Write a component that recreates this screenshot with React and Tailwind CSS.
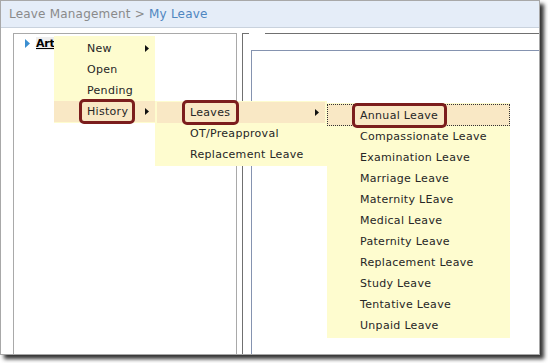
import React from "react";

const Arrow = () => (
  <svg width="4" height="7" viewBox="0 0 4 7" className="absolute right-[6px] top-[7px]">
    <path d="M0 0 L4 3.5 L0 7 Z" fill="#111" />
  </svg>
);

const Boxed = ({ children, left = 8, right = 7 }) => (
  <span className="relative inline-block h-[21px]">
    {children}
    <span
      className="absolute -top-[2px] -bottom-[2px] border-[3px] border-[#7b1d1d] rounded-[5px]"
      style={{ left: -left, right: -right }}
    />
  </span>
);

const leaveTypes = [
  "Compassionate Leave",
  "Examination Leave",
  "Marriage Leave",
  "Maternity LEave",
  "Medical Leave",
  "Paternity Leave",
  "Replacement Leave",
  "Study Leave",
  "Tentative Leave",
  "Unpaid Leave",
];

export default function App() {
  return (
    <div className="w-[548px] h-[363px] bg-white font-['DejaVu_Sans',Verdana,sans-serif]">
      <div className="relative w-[540px] h-[355px] border border-[#a8a8a8] bg-white shadow-[4px_4px_4px_rgba(0,0,0,0.8)] flex flex-col">
        {/* breadcrumb */}
        <div className="h-[27px] bg-[#e5edf8] border-b border-[#c9d2dd] pl-[8px] text-[12px] leading-[26px] tracking-[0.2px]">
          <span className="text-[#8a8a8a]">Leave Management &gt; </span>
          <span className="text-[#4f86c0]">My Leave</span>
        </div>

        <div className="flex-1 flex pl-[12px] pt-[5px]">
          {/* tree panel */}
          <div className="w-[224px] border-l border-t border-r border-[#a9a9a9] pt-[2px] pl-[11px]">
            <div className="flex items-center gap-[6px] h-[14px]">
              <svg width="5" height="9" viewBox="0 0 5 9">
                <path d="M0 0 L5 4.5 L0 9 Z" fill="#3b8fd1" />
              </svg>
              <span className="bg-[#eeeeee] text-[11px] font-bold underline text-black leading-[13px] tracking-[-0.2px]">Art</span>
            </div>
          </div>

          {/* main panel */}
          <div className="flex-1 ml-[5px] border-l border-[#707070] flex flex-col">
            <div className="flex">
              <div className="w-[6px] border-t border-[#707070]" />
              <div className="w-[16px]" />
              <div className="flex-1 border-t border-[#707070]" />
            </div>
            <div className="flex-1 mt-[16px] ml-[8px] border-l border-t border-[#8593b0]" />
          </div>
        </div>

        {/* context menu level 1 */}
        <div className="absolute left-[53px] top-[35px] w-[101px] bg-[#fefccf] pt-[2px] pb-[1px] text-[11px] text-[#262626] leading-[21px] tracking-[0.3px]">
          <div className="relative h-[21px] pl-[33px]">New<Arrow /></div>
          <div className="h-[21px] pl-[33px]">Open</div>
          <div className="h-[21px] pl-[33px]">Pending</div>
          <div className="relative h-[21px] pl-[33px] bg-[#f9e8c5]">
            <Boxed>History</Boxed>
            <Arrow />
          </div>
        </div>

        {/* context menu level 2 */}
        <div className="absolute left-[154px] top-[100px] w-[172px] bg-[#fefccf] pt-[1px] pb-[1px] text-[11px] text-[#262626] leading-[21px] tracking-[0.3px]">
          <div className="relative h-[21px] pl-[35px] bg-[#f9e8c5] mx-[2px]">
            <span className="-ml-[2px]"><Boxed right={9}>Leaves</Boxed></span>
            <Arrow />
          </div>
          <div className="h-[21px] pl-[35px]">OT/Preapproval</div>
          <div className="h-[21px] pl-[35px]">Replacement Leave</div>
        </div>

        {/* context menu level 3 */}
        <div className="absolute left-[326px] top-[102px] w-[183px] bg-[#fefccf] pt-[1px] pb-[2px] text-[11px] text-[#262626] leading-[21px] tracking-[0.3px]">
          <div className="h-[22px] pl-[32px] border border-dotted border-[#333] bg-[#f9e8c5]">
            <Boxed right={9}>Annual Leave</Boxed>
          </div>
          {leaveTypes.map((t) => (
            <div key={t} className="h-[21px] pl-[33px]">{t}</div>
          ))}
        </div>
      </div>
    </div>
  );
}
